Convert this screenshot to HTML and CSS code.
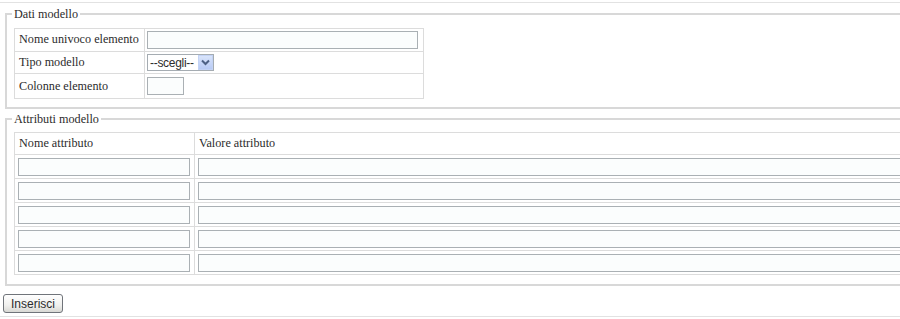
FILE: index.html
```html
<!DOCTYPE html>
<html lang="it">
<head>
<meta charset="utf-8">
<title>Modello</title>
<link rel="stylesheet" href="styles.css">
</head>
<body>
<div class="page">
  <form class="form">
    <fieldset class="box box-dati">
      <legend class="box-title">Dati modello</legend>
      <table class="grid grid-dati">
        <tr class="row-a">
          <td class="lbl">Nome univoco elemento</td>
          <td class="val val-wide"><input class="field field-name" type="text"></td>
        </tr>
        <tr class="row-b">
          <td class="lbl">Tipo modello</td>
          <td class="val">
            <span class="select">
              <span class="select-text">--scegli--</span>
              <span class="select-arrow">
                <svg width="9" height="7" viewBox="0 0 9 7"><path d="M1 1.5 L4.5 5 L8 1.5" fill="none" stroke="#4d6185" stroke-width="2"/></svg>
              </span>
            </span>
          </td>
        </tr>
        <tr class="row-c">
          <td class="lbl">Colonne elemento</td>
          <td class="val"><input class="field field-cols" type="text"></td>
        </tr>
      </table>
    </fieldset>

    <fieldset class="box box-attr">
      <legend class="box-title">Attributi modello</legend>
      <table class="grid grid-attr">
        <tr class="head">
          <td class="hcell hcell-name">Nome attributo</td>
          <td class="hcell">Valore attributo</td>
        </tr>
        <tr><td class="acell"><input class="field field-an" type="text"></td><td class="acell"><input class="field field-av" type="text"></td></tr>
        <tr><td class="acell"><input class="field field-an" type="text"></td><td class="acell"><input class="field field-av" type="text"></td></tr>
        <tr><td class="acell"><input class="field field-an" type="text"></td><td class="acell"><input class="field field-av" type="text"></td></tr>
        <tr><td class="acell"><input class="field field-an" type="text"></td><td class="acell"><input class="field field-av" type="text"></td></tr>
        <tr><td class="acell"><input class="field field-an" type="text"></td><td class="acell"><input class="field field-av" type="text"></td></tr>
      </table>
    </fieldset>

    <div class="actions">
      <button class="btn" type="button">Inserisci</button>
    </div>
  </form>
</div>
</body>
</html>
```

FILE: styles.css
```css
html {
  overflow: hidden;
  background: #ffffff;
}
body {
  margin: 0;
  font-family: "Liberation Serif", "Times New Roman", serif;
  font-size: 12.2px;
  color: #2c2c2c;
}
.page {
  width: 1100px;
  margin-top: 2px;
  border-top: 1px solid #e2e2e2;
  border-bottom: 1px solid #e2e2e2;
  padding-bottom: 3px;
}
.form {
  margin: 0;
}
.box {
  margin: 3px 0 0 5px;
  padding: 0 0 8px 7px;
  border: 2px solid #d8d8d8;
  min-width: 0;
}
.box-attr {
  margin-top: 2px;
  padding-bottom: 9px;
}
.box-title {
  padding: 0 2px;
  margin-left: -2px;
  line-height: 16px;
  height: 16px;
  color: #2c2c2c;
}
.grid {
  border-collapse: collapse;
  border: 1px solid #dcdcdc;
}
.grid-dati {
  margin-top: 6px;
  width: 410px;
}
.grid-dati td {
  border: 1px solid #dcdcdc;
  vertical-align: middle;
  padding: 0;
}
.grid-dati .lbl {
  width: 125px;
  padding-left: 4px;
}
.grid-dati .val {
  padding-left: 2px;
}
.row-a { height: 23px; }
.row-b { height: 22px; }
.row-c { height: 25px; }
.grid-dati .row-a td { padding-top: 1px; padding-bottom: 2px; }

.field {
  box-sizing: border-box;
  display: block;
  height: 18px;
  margin: 0;
  padding: 0 2px;
  border: 1px solid #aab0b4;
  background: #fbfdfd;
  font: 12px "Liberation Sans", Arial, sans-serif;
}
.field-name { width: 271px; }
.field-cols { width: 37px; }

.select {
  box-sizing: border-box;
  display: flex;
  align-items: center;
  width: 67px;
  height: 17px;
  border: 1px solid #a5acb2;
  background: #ffffff;
  font: 12px "Liberation Sans", Arial, sans-serif;
  color: #2c2c2c;
}
.select-text {
  flex: 1;
  padding-left: 2px;
  letter-spacing: -0.3px;
}
.select-arrow {
  box-sizing: border-box;
  display: flex;
  align-items: center;
  justify-content: center;
  width: 15px;
  height: 15px;
  background: linear-gradient(#d9e4fb, #b8cbf5);
  border: 1px solid #c3d3f5;
}

.grid-attr {
  margin-top: 5px;
  width: 1200px;
}
.grid-attr td {
  border: 1px solid #dcdcdc;
}
.hcell {
  height: 21px;
  padding: 0 4px;
  vertical-align: middle;
}
.hcell-name {
  width: 171px;
}
.acell {
  padding: 3px 3px 2px 3px;
}
.field-an { width: 172px; }
.field-av { width: 900px; }

.actions {
  margin-top: 8px;
  padding-left: 3px;
}
.btn {
  display: block;
  box-sizing: border-box;
  width: 60px;
  height: 19px;
  margin: 0;
  padding: 0;
  border: 1px solid #70747a;
  border-radius: 3px;
  background: linear-gradient(#ffffff, #f0f0ee 60%, #d8d8d4);
  font: 12px "Liberation Sans", Arial, sans-serif;
  color: #2c2c2c;
}
```
